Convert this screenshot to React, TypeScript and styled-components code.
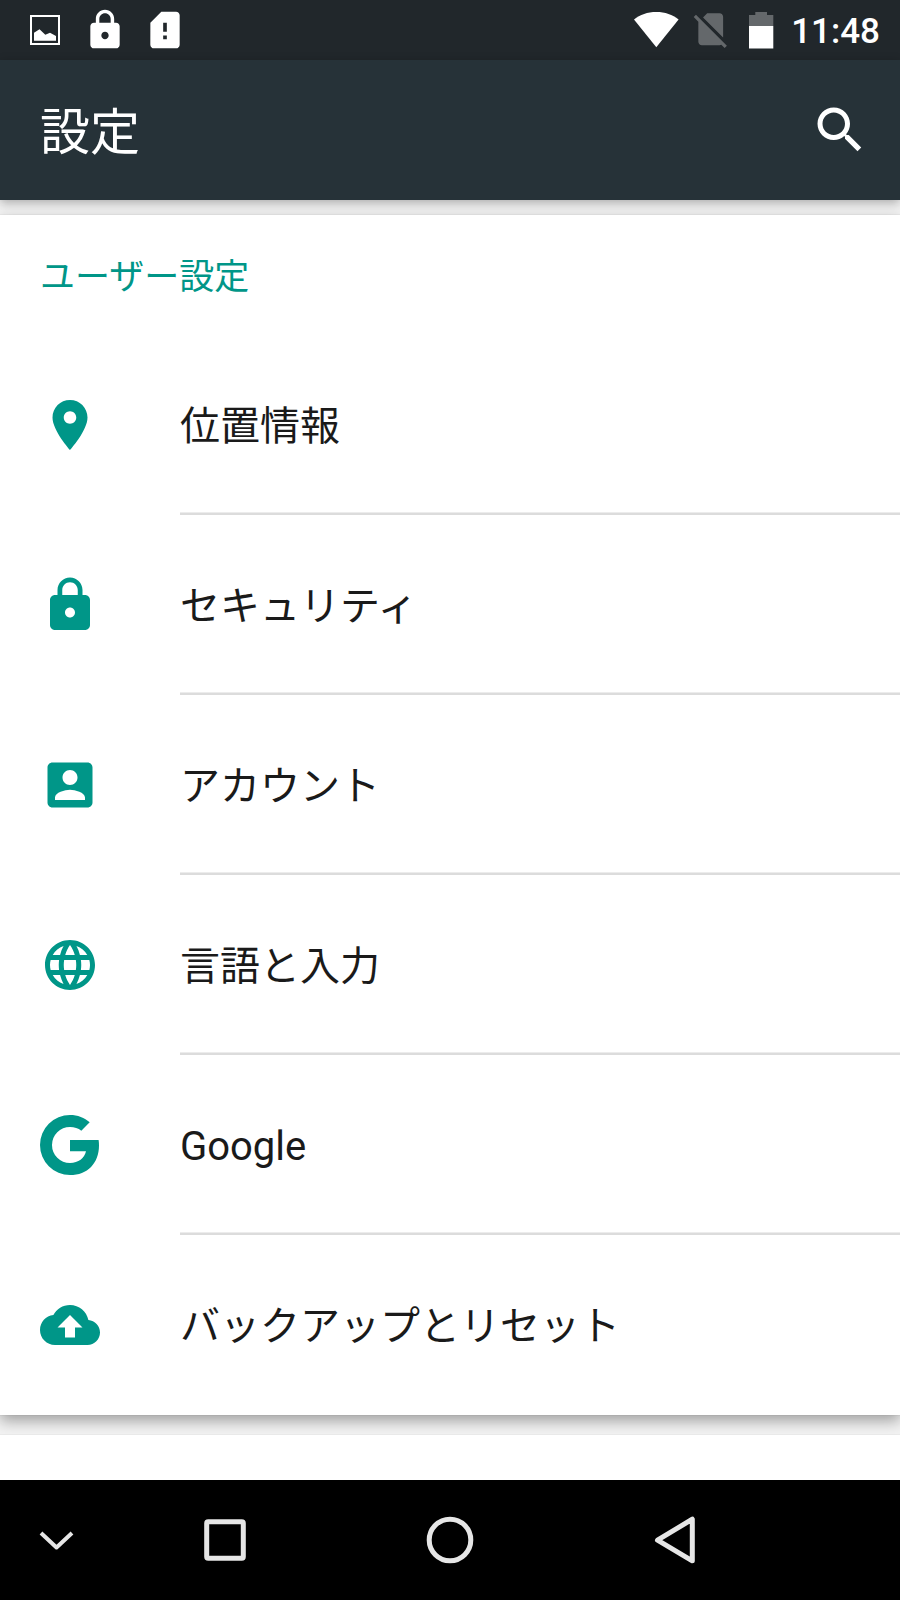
import React from "react";
import styled, { createGlobalStyle } from "styled-components";

const GlobalStyle = createGlobalStyle`
  *, *::before, *::after { box-sizing: border-box; }
  body {
    margin: 0;
    background: #f3f3f3;
    font-family: Roboto, "Noto Sans CJK JP", sans-serif;
    color: #1a1a1a;
  }
`;

const Screen = styled.div`
  display: flex;
  flex-direction: column;
  min-height: 100vh;
`;

const StatusBar = styled.div`
  display: flex;
  align-items: center;
  justify-content: space-between;
  height: 60px;
  padding: 0 20px 0 23px;
  background: #21272b;
  color: #ffffff;
`;

const StatusGroup = styled.div<{ $gap: number }>`
  display: flex;
  align-items: center;
  gap: ${(p) => p.$gap}px;
`;

const StatusIcon = styled.svg`
  display: block;
  height: 44px;
  fill: currentColor;
`;

const Clock = styled.time`
  padding: 4px 0 0 3px;
  font-size: 35px;
  line-height: 44px;
  font-weight: 500;
`;

const AppBar = styled.header`
  position: relative;
  z-index: 1;
  display: flex;
  align-items: center;
  justify-content: space-between;
  height: 140px;
  padding: 0 30px 0 40px;
  background: #263238;
  color: #ffffff;
  box-shadow: 0 3px 10px rgba(0, 0, 0, 0.3);
`;

const Title = styled.h1`
  margin: 0;
  padding-top: 5px;
  font-size: 50px;
  line-height: 60px;
  font-weight: 400;
`;

const IconButton = styled.button`
  display: flex;
  align-items: center;
  justify-content: center;
  padding: 0;
  border: 0;
  background: none;
  color: inherit;
  cursor: pointer;
`;

const Icon = styled.svg`
  display: block;
  flex: none;
  width: 60px;
  height: 60px;
  fill: currentColor;
`;

const Content = styled.main`
  flex: 1;
  display: flex;
  flex-direction: column;
  gap: 20px;
  padding-top: 15px;
`;

const Card = styled.section`
  background: #ffffff;
  box-shadow: 0 6px 14px rgba(0, 0, 0, 0.34), 0 0 1px rgba(0, 0, 0, 0.2);
`;

const NextCard = styled.section`
  position: relative;
  flex: 1;
  min-height: 45px;
  background: #ffffff;
  box-shadow: 0 0 1px rgba(0, 0, 0, 0.2);
`;

const CardTitle = styled.h2`
  display: flex;
  align-items: center;
  height: 120px;
  margin: 0;
  padding: 5px 40px 0;
  color: #009688;
  font-size: 35px;
  line-height: 44px;
  font-weight: 400;
`;

const List = styled.ul`
  margin: 0;
  padding: 0;
  list-style: none;
`;

const RowLink = styled.a`
  display: flex;
  align-items: center;
  gap: 80px;
  height: 180px;
  padding-left: 40px;
  color: #009688;
  text-decoration: none;
`;

const RowLabel = styled.span<{ $divided: boolean }>`
  flex: 1;
  display: flex;
  align-items: center;
  align-self: stretch;
  padding-top: 4px;
  color: #1a1a1a;
  font-size: 40px;
  line-height: 60px;
  box-shadow: ${(p) => (p.$divided ? "inset 0 -2px #dcdcdc, inset 0 -3px #ececec" : "none")};
`;

const NavBar = styled.nav`
  position: relative;
  z-index: 1;
  display: grid;
  grid-template-columns: 1fr 2fr 2fr 2fr 1fr;
  height: 120px;
  background: #000000;
  color: #e6e6e6;
`;

const NavIcon = styled.svg<{ $stroke?: number }>`
  display: block;
  width: 60px;
  height: 60px;
  fill: none;
  stroke: currentColor;
  stroke-width: ${(p) => p.$stroke ?? 5};
  stroke-linejoin: round;
`;

const LOCK_PATH =
  "M18 8h-1V6c0-2.76-2.24-5-5-5S7 3.24 7 6v2H6c-1.1 0-2 .9-2 2v10c0 1.1.9 2 2 2h12c1.1 0 2-.9 2-2V10c0-1.1-.9-2-2-2zm-6 9c-1.1 0-2-.9-2-2s.9-2 2-2 2 .9 2 2-.9 2-2 2zm3.1-9H8.9V6c0-1.71 1.39-3.1 3.1-3.1s3.1 1.39 3.1 3.1v2z";

type Item = { id: string; label: string; viewBox?: string; path: string };

const items: Item[] = [
  {
    id: "location",
    label: "位置情報",
    path: "M12 2C8.13 2 5 5.13 5 9c0 5.25 7 13 7 13s7-7.75 7-13c0-3.87-3.13-7-7-7zm0 9.5c-1.38 0-2.5-1.12-2.5-2.5s1.12-2.5 2.5-2.5 2.5 1.12 2.5 2.5-1.12 2.5-2.5 2.5z",
  },
  {
    id: "security",
    label: "セキュリティ",
    path: LOCK_PATH,
  },
  {
    id: "accounts",
    label: "アカウント",
    path: "M3 5v14c0 1.1.89 2 2 2h14c1.1 0 2-.9 2-2V5c0-1.1-.9-2-2-2H5c-1.11 0-2 .9-2 2zm12 4c0 1.66-1.34 3-3 3s-3-1.34-3-3 1.34-3 3-3 3 1.34 3 3zm-9 8c0-2 4-3.1 6-3.1s6 1.1 6 3.1v1H6v-1z",
  },
  {
    id: "language",
    label: "言語と入力",
    path: "M11.99 2C6.47 2 2 6.48 2 12s4.47 10 9.99 10C17.52 22 22 17.52 22 12S17.52 2 11.99 2zm6.93 6h-2.95c-.32-1.25-.78-2.45-1.38-3.56 1.84.63 3.37 1.91 4.33 3.56zM12 4.04c.83 1.2 1.48 2.53 1.91 3.96h-3.82c.43-1.43 1.08-2.76 1.91-3.96zM4.26 14C4.1 13.36 4 12.69 4 12s.1-1.36.26-2h3.38c-.08.66-.14 1.32-.14 2 0 .68.06 1.34.14 2H4.26zm.82 2h2.95c.32 1.25.78 2.45 1.38 3.56-1.84-.63-3.37-1.9-4.33-3.56zm2.95-8H5.08c.96-1.66 2.49-2.93 4.33-3.56C8.81 5.55 8.35 6.75 8.03 8zM12 19.96c-.83-1.2-1.48-2.53-1.91-3.96h3.82c-.43 1.43-1.08 2.76-1.91 3.96zM14.34 14H9.66c-.09-.66-.16-1.32-.16-2 0-.68.07-1.35.16-2h4.68c.09.65.16 1.32.16 2 0 .68-.07 1.34-.16 2zm.25 5.56c.6-1.11 1.06-2.31 1.38-3.56h2.95c-.96 1.65-2.49 2.93-4.33 3.56zM16.36 14c.08-.66.14-1.32.14-2 0-.68-.06-1.34-.14-2h3.38c.16.64.26 1.31.26 2s-.1 1.36-.26 2h-3.38z",
  },
  {
    id: "google",
    label: "Google",
    viewBox: "0 0 60 60",
    path: "M30 25H58.6C58.9 26.8 59 28.6 59 30.4C59 48 47.6 60 30 60A30 30 0 0 1 30 0C37.6 0 44.6 2.7 49.7 7.3L41.3 15.7C38.3 13.3 34.4 12 30 12A18 18 0 0 0 30 48C38.6 48 44.4 43.4 46 36.3H30Z",
  },
  {
    id: "backup",
    label: "バックアップとリセット",
    path: "M19.35 10.04C18.67 6.59 15.64 4 12 4 9.11 4 6.6 5.64 5.35 8.04 2.34 8.36 0 10.91 0 14c0 3.31 2.69 6 6 6h13c2.76 0 5-2.24 5-5 0-2.64-2.05-4.78-4.65-4.96zM14 13v4h-4v-4H7l5-5 5 5h-3z",
  },
];

export default function App() {
  return (
    <Screen>
      <GlobalStyle />
      <StatusBar>
        <StatusGroup $gap={16}>
          <StatusIcon width="44" viewBox="0 0 44 44" aria-hidden="true">
            <rect x="8" y="8" width="28" height="28" fill="none" stroke="currentColor" strokeWidth="2" />
            <path d="M11 32.7V24.7L16.5 21.3L22.3 26.7L27 24.7L33 28V32.7Z" />
          </StatusIcon>
          <StatusIcon width="44" viewBox="0 0 24 24" aria-hidden="true">
            <path d={LOCK_PATH} />
          </StatusIcon>
          <StatusIcon width="44" viewBox="0 0 24 24" aria-hidden="true">
            <path d="M18 2h-8L4.02 8 4 20c0 1.1.9 2 2 2h12c1.1 0 2-.9 2-2V4c0-1.1-.9-2-2-2zm-5 15h-2v-2h2v2zm0-4h-2V8h2v5z" />
          </StatusIcon>
        </StatusGroup>
        <StatusGroup $gap={14}>
          <StatusIcon width="46" viewBox="0 0 46 44" aria-hidden="true">
            <path d="M1 11.6C7 6.6 14.5 4 23.3 4S39.5 6.6 45.6 11.6L23.3 39.2Z" />
          </StatusIcon>
          <StatusIcon width="41" viewBox="0 0 41 44" opacity="0.3" aria-hidden="true">
            <path
              transform="translate(-3.5 0) scale(1.77)"
              d="M18.99 5c0-1.1-.89-2-1.99-2h-7L7.66 5.34 19 16.68 18.99 5zM3.65 3.88L2.38 5.15 5 7.77V19c0 1.1.9 2 2 2h10.01c.35 0 .67-.1.96-.26l1.88 1.88 1.27-1.27L3.65 3.88z"
            />
          </StatusIcon>
          <StatusIcon width="26" viewBox="0 0 26 44" aria-hidden="true">
            <path opacity="0.3" d="M1 18V7H7.3V4H19V7H25.3V18Z" />
            <path d="M1 18H25.3V40.5H1Z" />
          </StatusIcon>
          <Clock dateTime="11:48">11:48</Clock>
        </StatusGroup>
      </StatusBar>

      <AppBar>
        <Title lang="ja">設定</Title>
        <IconButton type="button" aria-label="検索">
          <Icon viewBox="0 0 24 24" aria-hidden="true">
            <path d="M15.5 14h-.79l-.28-.27C15.41 12.59 16 11.11 16 9.5 16 5.91 13.09 3 9.5 3S3 5.91 3 9.5 5.91 16 9.5 16c1.61 0 3.09-.59 4.23-1.57l.27.28v.79l5 4.99L20.49 19l-4.99-5zm-6 0C7.01 14 5 11.99 5 9.5S7.01 5 9.5 5 14 7.01 14 9.5 11.99 14 9.5 14z" />
          </Icon>
        </IconButton>
      </AppBar>

      <Content lang="ja">
        <Card aria-labelledby="user-settings">
          <CardTitle id="user-settings">ユーザー設定</CardTitle>
          <List>
            {items.map((item, i) => (
              <li key={item.id}>
                <RowLink href={`#${item.id}`}>
                  <Icon viewBox={item.viewBox ?? "0 0 24 24"} aria-hidden="true">
                    <path d={item.path} />
                  </Icon>
                  <RowLabel $divided={i < items.length - 1}>{item.label}</RowLabel>
                </RowLink>
              </li>
            ))}
          </List>
        </Card>
        <NextCard />
      </Content>

      <NavBar>
        <IconButton type="button" aria-label="閉じる">
          <NavIcon viewBox="0 0 60 60" $stroke={4} aria-hidden="true">
            <path d="M15 23L30.5 37.5L46 23" />
          </NavIcon>
        </IconButton>
        <IconButton type="button" aria-label="履歴">
          <NavIcon viewBox="0 0 60 60" aria-hidden="true">
            <rect x="11.7" y="11.7" width="36.6" height="36.6" rx="1.5" />
          </NavIcon>
        </IconButton>
        <IconButton type="button" aria-label="ホーム">
          <NavIcon viewBox="0 0 60 60" aria-hidden="true">
            <circle cx="30" cy="30" r="20.8" />
          </NavIcon>
        </IconButton>
        <IconButton type="button" aria-label="戻る">
          <NavIcon viewBox="0 0 60 60" aria-hidden="true">
            <path d="M47.3 9.2V50.8L12.5 30.2Z" />
          </NavIcon>
        </IconButton>
      </NavBar>
    </Screen>
  );
}
